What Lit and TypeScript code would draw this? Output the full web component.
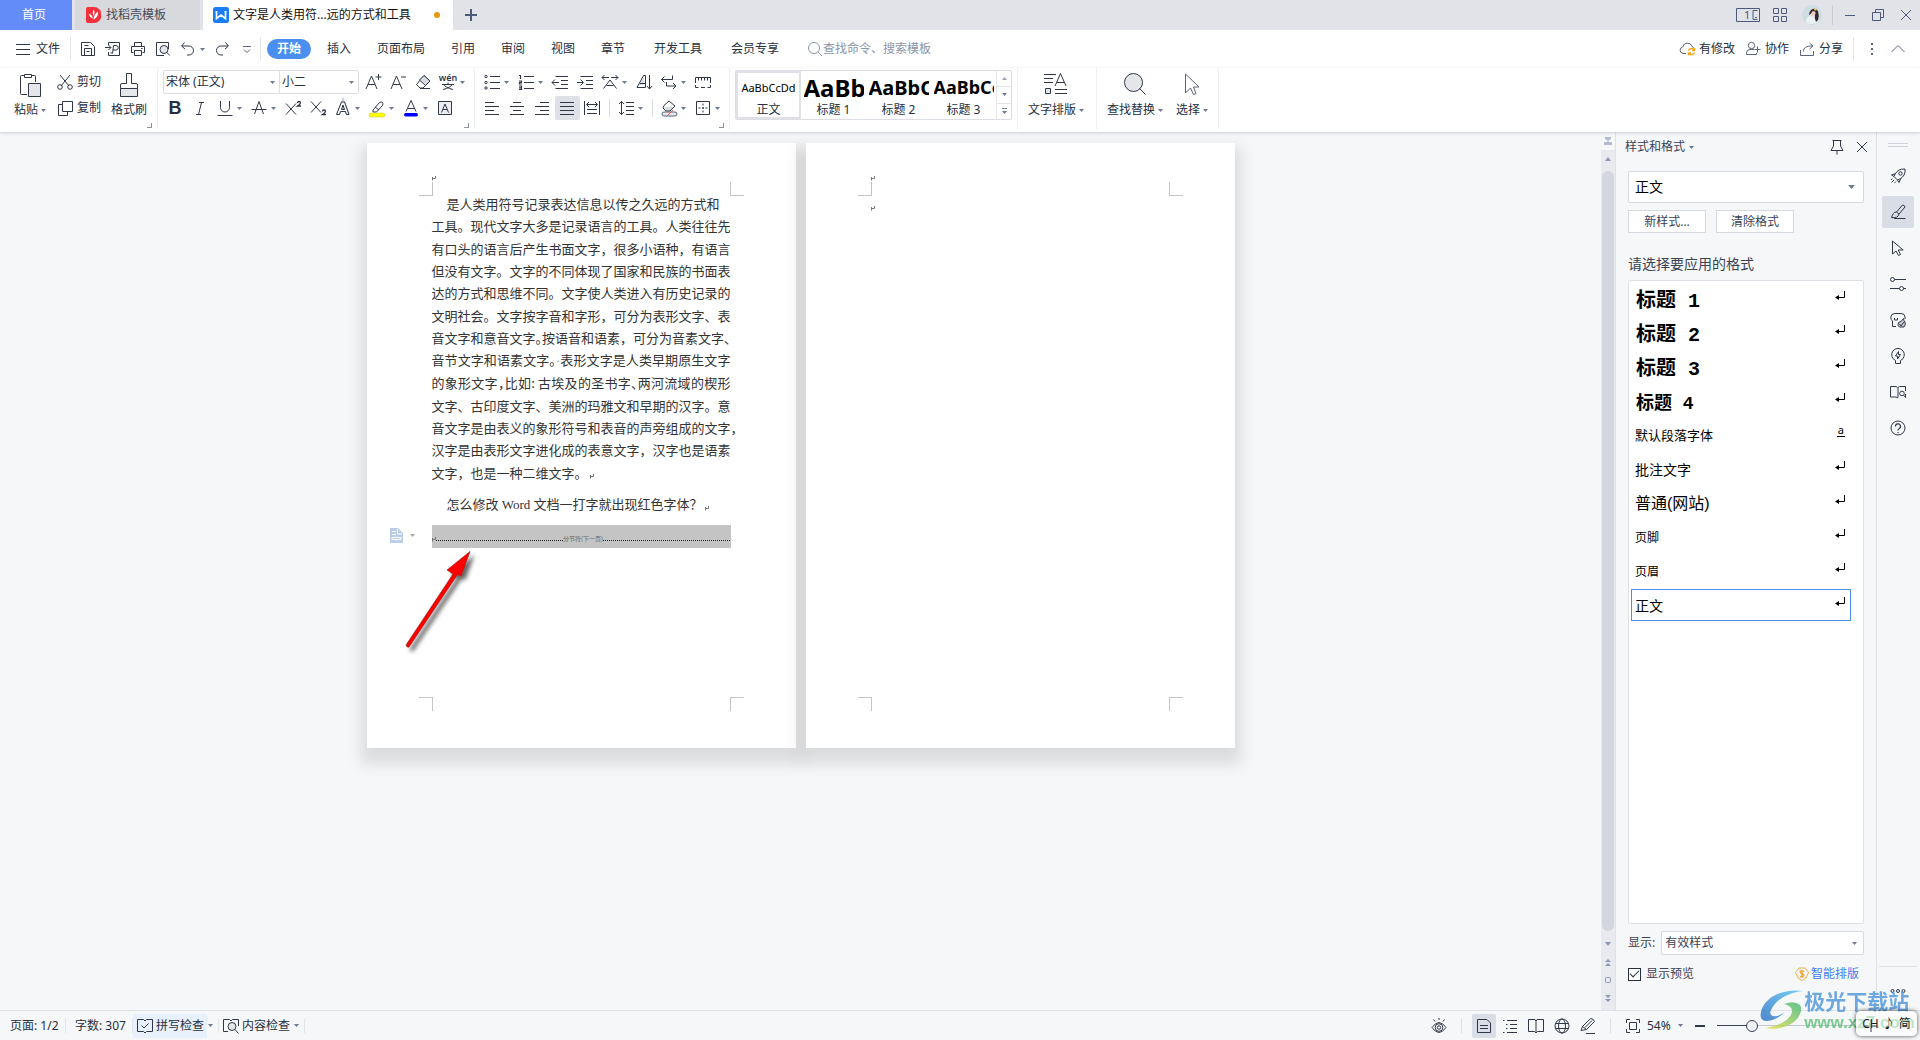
import { LitElement, html, svg, css, nothing } from "lit";
import { customElement } from "lit/decorators.js";
import { classMap } from "lit/directives/class-map.js";

/* Line icons; unless a size is given each one sits on a 16 x 16 grid. */
const glyphs: Record<string, unknown> = {
  menu: svg`<path d="M1 3.5h14M1 8.5h14M1 13.5h14"/>`,
  save: svg`<path d="M1.5 14.5v-13h9l4 4v9zM4.5 14.5v-7h7v7M4.5 4.5h4M6.5 10.5h3"/>`,
  exportPdf: svg`<path d="M3.5 4V1.500h11v13h-11V11M0 6.500h5.500M3.500 4l2.500 2.500L3.500 9M7.500 12.500l1-8h2.500a2.200 2.200 0 0 1 0 4.500H8M5.500 12h1.500"/>`,
  print: svg`<path d="M4.500 5.500v-4h7v4M3.500 11.500h-2v-6h13v6h-2M4.500 9.500h7v5h-7zM11 7.500h1.500"/>`,
  preview: svg`<path d="M9 14.500H1.500v-13h12V8" /><circle cx="9" cy="8.500" r="4" fill="#e4e6ea"/><path d="M11.800 11.500l3 3"/>`,
  undo: svg`<path d="M4.500 1.500l-3 3.500 3.500 3M2 5h7a4.200 4.200 0 0 1 0 9H7"/>`,
  redo: svg`<path d="M11.500 1.500l3 3.500-3.500 3M14 5H7a4.200 4.200 0 0 0 0 9h2"/>`,
  more: svg`<path d="M4 5.500h8M5 8.500l3 3 3-3" stroke="#5b6478"/>`,
  search: svg`<circle cx="7" cy="7" r="5.500" stroke="#8a96ae"/><path d="M11 11l4 4" stroke="#8a96ae"/>`,
  cloud: svg`<path d="M7 12.500H4a3.300 3.300 0 0 1-.3-6.500 4.800 4.800 0 0 1 9.300-.5c1 .3 1.500 1 1.800 2"/><path d="M9.500 9.800a3.200 3.200 0 0 1 5.700-.8M15.500 7v2.500H13M15.500 11.500a3.200 3.200 0 0 1-5.700.8M9.500 14.300V12H12" stroke="#f5a81c" stroke-width="1.500"/>`,
  person: svg`<circle cx="6.500" cy="4.500" r="3.200"/><path d="M9 8.500H5a3.500 3.500 0 0 0-3.500 3.500v1.500h10V12M9.500 8.500h6M12.500 5.500v6"/>`,
  share: svg`<path d="M1.500 9v5.500h13V10M4.500 10.500c0-4 3-5.500 9-5.500M10.500 2l3.500 3-3.500 3"/>`,
  dots: svg`<g fill="#5b6478" stroke="none"><path d="M7 2h2v2H7zM7 7h2v2H7zM7 12h2v2H7z"/></g>`,
  chevUp: svg`<path d="M1.500 11L8 4.500l6.500 6.500" stroke="#5b6478"/>`,
  cut: svg`<path d="M3 1l9 11M13 1L4 12"/><circle cx="3" cy="13" r="2.300"/><circle cx="13" cy="13" r="2.300"/>`,
  copy: svg`<path d="M5.500 1.500h10v10h-10zM5.500 4.500h-4v11h9v-4"/>`,
  bigger: svg`<path d="M1 15L6.500 2 12 15M3 10.500h7M13.500 0v6M10.500 3h6"/>`,
  smaller: svg`<path d="M1 15L6.500 2 12 15M3 10.500h7M11 3h5"/>`,
  eraser: svg`<path d="M9 1.500l6 5.500-7 7H5L1.500 10.500z"/><path d="M9 1.500l6 5.500-4.500 4.500-6-5.500z" fill="#d9dbe0"/><path d="M5 14.500h10"/>`,
  italic: svg`<path d="M7 2.500h5M4 14.500h5M9.500 2.500l-3 12"/>`,
  underline: svg`<path d="M3.500 1v6.500a4.500 4.500 0 0 0 9 0V1M.5 15.500h15"/>`,
  strike: svg`<path d="M3.500 14L8 1.500 12.500 14M.5 9.500h15"/>`,
  sup: svg`<path d="M1 3.500l10 11M11 3.500l-10 11"/><path d="M12.500 3q0-1.500 1.500-1.500t1.500 1.500q0 1-3 3h3.500" stroke-width="1.300"/>`,
  sub: svg`<path d="M1 1.500l10 11M11 1.500l-10 11"/><path d="M12.500 11.500q0-1.500 1.500-1.500t1.500 1.500q0 1-3 3h3.500" stroke-width="1.300"/>`,
  effect: svg`<path d="M3 14.500L8 2l5 12.500M5 10h6" stroke="#cfd3db" stroke-width="4"/><path d="M1.500 14.500L6.500 2h3l4.500 12.500h-2.500l-1-3h-5l-1 3zM6.500 9.500h3L8 5z" fill="#fff"/>`,
  marker: svg`<path d="M4 10l6.500-7.500q2-1 3 0t0 3L7.500 12H4zM6 7l4 3"/><rect x="0" y="13" width="16" height="4" rx="2" fill="#ff0" stroke="#bdbd50" stroke-width=".5"/>`,
  fontColor: svg`<path d="M3 11.500L8 .5l5 11M4.500 8.500h7"/><rect x="1" y="13" width="14" height="3.500" rx="1.700" fill="#00f" stroke="none"/>`,
  charBox: svg`<path d="M1.500 1.500h13v13h-13z" fill="#eceef1"/><path d="M4.500 12.500L8 4l3.500 8.500M6 9.500h4"/>`,
  bullets: svg`<circle cx="2" cy="2.500" r="1.200"/><circle cx="2" cy="8.500" r="1.200"/><circle cx="2" cy="14" r="1.200"/><path d="M6 2.500h10M6 8.500h10M6 14.500h10"/>`,
  numbers: svg`<path d="M1 1.500h1.500V5M1 7h2.500v1.500H1.500V10H4M1 12h2.500v3.500H1M1 13.800h2" stroke-width="1.200"/><path d="M6 2.500h10M6 8.500h10M6 14.500h10"/>`,
  outdent: svg`<path d="M3.500 2.500H16M9 6.500h7M9 10.500h7M3.500 14.500H16M0 8.500h7M3 5.500l-3 3 3 3"/>`,
  indent: svg`<path d="M3.500 2.500H16M9 6.500h7M9 10.500h7M3.500 14.500H16M0 8.500h6M3.500 5.500l3 3-3 3"/>`,
  textArrows: svg`<path d="M0 3.500h7M2.500 1L0 3.500 2.500 6M9 3.500h7M13.500 1L16 3.500 13.500 6M1.500 14.500L8 6l6.500 8.500M4.500 11.500h7"/>`,
  sort: svg`<path d="M3 11l5-8v8z" fill="#d9dbe0" stroke="none"/><path d="M1 13.500L7.500 1.500h2v12zM4 9.500h5" /><path d="M13.500 1v14M11 12l2.500 3 2.500-3"/>`,
  breaks: svg`<path d="M11.500 1.500v4h-11M3.500 2.500l-3 3 3 3M5.500 8v4h9.500M12 9l3 3-3 3"/>`,
  ruler: svg`<path d="M.5 9V3.500h15V9M3.500 3.500v3M6.500 3.500v3M9.500 3.500v3M12.500 3.500v3M.5 11v2.500h3M6 13.500h4M12.500 13.500h3V11"/>`,
  alignL: svg`<path d="M1 2.500h9M1 6.500h14M1 10.500h9M1 14.500h14"/>`,
  alignC: svg`<path d="M4 2.500h8M1 6.500h14M4 10.500h8M1 14.500h14"/>`,
  alignR: svg`<path d="M6 2.500h9M1 6.500h14M6 10.500h9M1 14.500h14"/>`,
  alignJ: svg`<path d="M1 2.500h14M1 6.500h14M1 10.500h14M1 14.500h14"/>`,
  distribute: svg`<path d="M.5 1v14M15.500 1v14M3 4.500h10M5 2L2.500 4.500 5 7M11 2l2.500 2.500L11 7M3 9.500h10M3 13.500h10"/>`,
  lineSpace: svg`<path d="M3.500 1.500v13M1 4l2.500-2.500L6 4M1 12l2.500 2.500L6 12M8 2.500h8M8 6.500h8M8 10.500h8M8 14.500h8"/>`,
  fill: svg`<path d="M3 7h10l-4 4H5z" fill="#d9dbe0" stroke="none"/><path d="M3 5.500L8 1l6 5-5 5H5L2 8z"/><rect x="1" y="12" width="15" height="4" rx="2" fill="#e4e6ea" stroke="#5b6478"/><path d="M6 16l6-6" stroke="#e55"/>`,
  borders: svg`<path d="M1.500 1.500h13v13h-13z"/><path d="M8 3.500v9M3.500 8h9" stroke-dasharray="2 1.500"/>`,
  eye: svg`<path d="M1 9.500q3.500-5 7-5t7 5q-3.500 5-7 5t-7-5zM8 0v2M2.500 1.500L4 3.500M13.500 1.500L12 3.500"/><circle cx="8" cy="9.500" r="3.800"/><circle cx="8" cy="9.500" r="1.700"/>`,
  pageView: svg`<path d="M1.500 1.500h9.500l3.500 3.500v9.500h-13zM4 7.500h8M4 10.500h8"/>`,
  outline: svg`<path d="M1 2.500h1.500M5 2.500h10M4 6.500h1.500M8 6.500h7M4 10.500h1.500M8 10.500h7M1 14.500h1.500M5 14.500h10"/>`,
  book: svg`<path d="M8 3v12M8 3L7 1.500H.5v12H6.500L8 15l1.500-1.500h6v-12H9z"/>`,
  globe: svg`<circle cx="8" cy="8" r="7"/><ellipse cx="8" cy="8" rx="3.500" ry="7"/><path d="M1.500 5.500h13M1.500 10.500h13"/>`,
  pen: svg`<path d="M1 12.500l1.500-4 8-8q3 0 4 3L6.500 11.500zM2.500 8.500l4 3M6 15.500h9M5 9.500l7-7"/>`,
  fit: svg`<path d="M1.500 5V1.500H5M11 1.500h3.500V5M14.500 11v3.500H11M5 14.500H1.500V11M4.500 4.500h7v7h-7z"/>`,
  spell: svg`<path d="M8 3L6.500 1.500h-6v12h6L8 15l1.500-1.500h6v-12h-6zM4.500 7.500L7 10l4.500-4.500"/>`,
  content: svg`<path d="M5 13.500H.5v-12h6L8 3l1.500-1.500h6V8"/><circle cx="9" cy="8.500" r="4" fill="#e4e6ea"/><path d="M12 11.500l3.500 4"/>`,
  rocket: svg`<path d="M15 1c-5-.3-7.500 1.500-9.500 4.500L1.500 7l2.500 1.500 3.500 3.500L9 14.500l1.800-4C13.500 8.500 15.500 6 15 1zM4 8.500l1.500-3M7.500 12l3.300-1.500M4 12l-2.500 2.500M2.500 10.500L1 12M6 13.500L4.500 15"/><circle cx="10.500" cy="5.500" r="1.700"/>`,
  brush: svg`<path d="M6.500 8l6-7q2 0 2.500 2L9 10M6.500 8c-3 0-3.500 2-5 5.500 4 .8 7-.5 7.500-3.500zM4 14.500h11.500"/>`,
  pointer: svg`<path d="M2.500 1v13l3.500-3 2.500 4.500 2-1-2.300-4.500h5z"/>`,
  sliders: svg`<circle cx="2.500" cy="3.500" r="2"/><path d="M4.500 3.500H16M0 12.500h9.500M13.500 12.500H16"/><circle cx="11.500" cy="12.500" r="2"/>`,
  picture: svg`<path d="M6 14.500H2.500V9Q.800 8 .8 5 1 1.500 5 1.500h6q4 0 4 3.500v2M4.500 6v2h3V6"/><path d="M8 12.500q0-3 3-3l2.500-3q0 2 1.500 3.500 1 3-1 5h-4.500q-1.500-1-1.500-2.500z" fill="#c7cbd3"/><path d="M9.500 12l1.500 2 3-4"/>`,
  bulb: svg`<path d="M5.500 12.500a6.300 6.300 0 1 1 5 0v3h-5zM8.500 3.500l-3 4.500h2v3l3-4.500h-2z"/>`,
  bookSearch: svg`<path d="M7.500 3.500L6 2.500H.5v10.500H6l2 1M8 3.500v10M8 3.500l1.500-1h6V7M15.500 13.500V10"/><circle cx="12" cy="9.500" r="2.300"/><path d="M13.700 11.200l2 2.300"/>`,
  help: svg`<circle cx="8" cy="8" r="7"/><path d="M5.500 6.500a2.500 2.500 0 1 1 3.500 2.200q-1 .5-1 1.800M8 12v1.200" stroke-width="1.200"/>`,
  pin: svg`<path d="M3.500 1.500h9M4.500 1.500v5.500L2 11.500h12L11.500 7V1.500M8 11.500v4"/>`,
  close: svg`<path d="M3 3l10 10M13 3L3 13"/>`,
  grid4: svg`<path d="M1.500 1.500h5v5h-5zM9.500 1.500h5v5h-5zM1.500 9.500h5v5h-5zM9.500 9.500h5v5h-5z"/>`,
  minimise: svg`<path d="M3 8.500h10"/>`,
  restore: svg`<path d="M2.500 5.500h8v8h-8zM5.500 5V2.500h8v8H11"/>`,
  plus: svg`<path d="M8 2v12M2 8h12" stroke-width="2"/>`,
  minus: svg`<path d="M3 8h10" stroke-width="2"/>`,
};

const icon = (name: string, cls = "") => html`
  <svg class="ico ${cls}" width="16" height="16" viewBox="0 0 16 16" aria-hidden="true">${glyphs[name]}</svg>`;

const caret = html`
  <svg class="caret" width="5" height="3" viewBox="0 0 5 3" aria-hidden="true"><path d="M0 0h5L2.500 3z"/></svg>`;

const enter = html`
  <svg class="enter" width="10" height="9" viewBox="0 0 10 9" aria-hidden="true">
    <path d="M9.500 0v6.500H2" fill="none" stroke="#000"/><path d="M0 6.500L4 4v5z"/>
  </svg>`;

const paraMark = html`
  <svg class="mark" width="4" height="5" viewBox="0 0 4 5" aria-hidden="true">
    <path d="M3.500 0v2.500H1M.5 1v3.500" fill="none" stroke="#777"/>
  </svg>`;

type Tool = { icon?: string; label: string; drop?: boolean; on?: boolean; sep?: boolean };

const fontTop: Tool[] = [
  { icon: "bigger", label: "增大字号" },
  { icon: "smaller", label: "减小字号" },
  { icon: "eraser", label: "清除格式" },
  { icon: "pinyin", label: "拼音指南", drop: true },
];
const fontBottom: Tool[] = [
  { icon: "bold", label: "加粗" },
  { icon: "italic", label: "倾斜" },
  { icon: "underline", label: "下划线", drop: true },
  { icon: "strike", label: "删除线", drop: true },
  { icon: "sup", label: "上标" },
  { icon: "sub", label: "下标" },
  { icon: "effect", label: "文字效果", drop: true },
  { icon: "marker", label: "突出显示", drop: true },
  { icon: "fontColor", label: "字体颜色", drop: true },
  { icon: "charBox", label: "字符底纹" },
];
const paraTop: Tool[] = [
  { icon: "bullets", label: "项目符号", drop: true },
  { icon: "numbers", label: "编号", drop: true },
  { icon: "outdent", label: "减少缩进量" },
  { icon: "indent", label: "增加缩进量" },
  { icon: "textArrows", label: "中文版式", drop: true },
  { icon: "sort", label: "排序" },
  { icon: "breaks", label: "显示编辑标记", drop: true },
  { icon: "ruler", label: "制表位" },
];
const paraBottom: Tool[] = [
  { icon: "alignL", label: "左对齐" },
  { icon: "alignC", label: "居中对齐" },
  { icon: "alignR", label: "右对齐" },
  { icon: "alignJ", label: "两端对齐", on: true },
  { icon: "distribute", label: "分散对齐" },
  { label: "", sep: true },
  { icon: "lineSpace", label: "行距", drop: true },
  { label: "", sep: true },
  { icon: "fill", label: "底纹颜色", drop: true },
  { icon: "borders", label: "边框", drop: true },
];

const bodyLines = [
  html`工具。现代文字大多是记录语言的工具。人类往往先`,
  html`有口头的语言后产生书面文字，很多小语种，有语言`,
  html`但没有文字。文字的不同体现了国家和民族的书面表`,
  html`达的方式和思维不同。文字使人类进入有历史记录的`,
  html`文明社会。文字按字音和字形，可分为表形文字、表`,
  html`音文字和意音文字<span class="half">。</span>按语音和语素，可分为音素文字、`,
  html`音节文字和语素文字<span class="half">。</span><span class="space">·</span>表形文字是人类早期原生文字`,
  html`的象形文字<span class="half">，</span>比如: 古埃及的圣书字<span class="half">、</span>两河流域的楔形`,
  html`文字、古印度文字、美洲的玛雅文和早期的汉字。意`,
  html`音文字是由表义的象形符号和表音的声旁组成的文字，`,
  html`汉字是由表形文字进化成的表意文字，汉字也是语素`,
];

const styleRows = [
  { text: "标题 1", cls: "h20" },
  { text: "标题 2", cls: "h20" },
  { text: "标题 3", cls: "h20" },
  { text: "标题 4", cls: "h18" },
  { text: "默认段落字体", cls: "t13", char: true },
  { text: "批注文字", cls: "t14" },
  { text: "普通(网站)", cls: "t16" },
  { text: "页脚", cls: "t12" },
  { text: "页眉", cls: "t12" },
  { text: "正文", cls: "t14", on: true },
];

@customElement("app-root")
export class AppRoot extends LitElement {
  static styles = css`
    :host {
      display: flex;
      flex-direction: column;
      position: relative;
      min-height: 100vh;
      overflow: hidden;
      background: #f6f7f9;
      color: #262f40;
      font: 12px/16px "Noto Sans", "Noto Sans CJK SC", sans-serif;
    }
    * { box-sizing: border-box; }
    button, select, input { font: inherit; color: inherit; margin: 0; }
    button {
      display: flex;
      align-items: center;
      border: 0;
      padding: 0;
      background: none;
      white-space: nowrap;
    }
    svg { flex: none; display: block; }
    .ico { fill: none; stroke: #2f3748; stroke-width: 1; overflow: visible; }
    .caret { fill: #6d7993; }
    .row { display: flex; align-items: center; }
    .grow { flex: 1; }
    .vsep { width: 1px; flex: none; background: #e3e5e9; }

    /* title bar */
    .titlebar { display: flex; align-items: center; height: 30px; background: #e1e3e8; }
    .tab { height: 30px; gap: 5px; }
    .tab-home { width: 72px; padding-right: 4px; justify-content: center; background: #638cf8; color: #fff; }
    .tab-docer { width: 125px; margin-left: 3px; padding-left: 11px; background: #d8d9dc; color: #444b59; }
    .tab-doc { width: 250px; margin-left: 3px; padding-left: 10px; background: #fff; color: #111; gap: 4px; }
    .dirty { width: 6px; height: 6px; border-radius: 50%; background: #e69a0b; margin-left: 19px; }
    .add { margin-left: 10px; }
    .add .ico, .win .ico { stroke: #4c5a7c; }
    .win { height: 30px; }
    .win button { justify-content: center; width: 28px; height: 30px; }
    .win .w24 { width: 24px; }
    .win .w40 { width: 40px; }
    .win .vsep { height: 20px; margin-right: 3px; background: #c8ccd4; }
    .count { fill: #4c5a7c; stroke: none; font-size: 11px; }

    /* menu row */
    .menu { display: flex; align-items: center; height: 38px; background: #fff; padding: 0 14px 0 15px; }
    .file { gap: 5px; width: 55px; }
    .menu .vsep { height: 24px; }
    .quick { gap: 9px; padding: 0 9px; width: 189px; }
    .undo-drop { display: flex; align-items: center; gap: 4px; width: 26px; }
    .pages { display: flex; align-items: center; padding-left: 6px; }
    .pages button { height: 20px; width: 50px; justify-content: center; }
    .pages .mid { width: 74px; }
    .pages .wide { width: 80px; }
    .pages .first { width: 44px; margin-right: 3px; border-radius: 10px; background: #4a8ff0; color: #fff; font-weight: 700; }
    .find { display: flex; align-items: center; margin-left: 15px; }
    .find input { width: 130px; border: 0; padding: 0; background: none; outline: 0; }
    .find input::placeholder { color: #8a94aa; opacity: 1; }
    .cloudbar { gap: 10px; }
    .cloudbar button { gap: 4px; }
    .cloudbar .ico { stroke: #5b6478; }

    /* ribbon */
    .ribbon {
      display: flex;
      height: 64px;
      background: #fff;
      box-shadow: 0 1px 3px rgba(60, 70, 90, .22);
      position: relative;
      z-index: 1;
    }
    .ribbon > .vsep { height: 61px; background: #eeeff2; }
    .group { display: flex; position: relative; padding-top: 2px; }
    .corner { position: absolute; right: 5px; bottom: 4px; width: 5px; height: 5px; border: solid #8b93a5; border-width: 0 1px 1px 0; }
    .clip { width: 157px; padding-left: 8px; }
    .big { flex-direction: column; justify-content: space-between; height: 51px; padding: 3px 0 1px; }
    .big .txt { display: flex; align-items: center; gap: 3px; height: 20px; }
    .w44 { width: 44px; }
    .stack { display: flex; flex-direction: column; gap: 2px; }
    .stack .line { display: flex; height: 24px; align-items: center; }
    .pair { padding-left: 5px; width: 55px; }
    .pair button { gap: 4px; height: 24px; }
    .fontgroup, .paragroup { padding-left: 5px; }
    .fontgroup { width: 316px; }
    .paragroup { width: 254px; }
    .combo { display: grid; align-items: center; height: 24px; border: 1px solid #dcdee3; border-radius: 2px; }
    .combo > * { grid-area: 1 / 1; }
    .combo select { appearance: none; border: 0; background: none; width: 100%; height: 100%; padding: 0 16px 0 2px; outline: 0; }
    .combo .caret { justify-self: end; margin-right: 4px; pointer-events: none; }
    .face { width: 117px; border-radius: 2px 0 0 2px; }
    .size { width: 79px; border-left: 0; border-radius: 0 2px 2px 0; margin-right: 2px; }
    .tool { width: 25px; height: 24px; padding-left: 4px; gap: 4px; border-radius: 2px; }
    .tool.drop { width: 34px; }
    .tool.on { background: #dde1e7; }
    .toolsep { width: 1px; height: 18px; margin: 0 4px; background: #dcdee3; }
    .bold { width: 16px; font: 700 18px/18px "Liberation Sans", sans-serif; text-align: center; }
    .wen { width: 16px; }

    .gallery { display: flex; height: 50px; margin: 0 5px; border: 1px solid #dcdee3; border-radius: 2px; width: 277px; }
    .style { flex-direction: column; width: 65px; height: 48px; overflow: hidden; padding: 2px 3px 0; }
    .style.on { border: 2px solid #dfe1e6; padding: 0; }
    .style .demo { height: 29px; line-height: 29px; width: 60px; overflow: hidden; text-align: left; color: #000; flex: none; }
    .style.on .demo { font-size: 11px; text-align: center; }
    .d24 { font: 700 24px/30px "Noto Sans", sans-serif; }
    .d20 { font: 700 20px/30px "Noto Sans", sans-serif; }
    .d18 { font: 700 18px/30px "Noto Sans", sans-serif; }
    .spin { display: flex; flex-direction: column; flex: 1; border-left: 1px solid #e3e5e9; }
    .spin button { flex: 1; justify-content: center; border-bottom: 1px solid #e3e5e9; }
    .spin button:last-child { border-bottom: 0; }
    .layout { width: 78px; padding-left: 9px; }
    .w58 { width: 58px; }
    .search { width: 121px; padding-left: 9px; gap: 11px; }
    .w34 { width: 34px; }

    /* work area */
    .work { display: flex; flex: 1; min-height: 0; }
    .canvas { flex: 1; display: flex; justify-content: center; align-items: flex-start; gap: 10px; padding-top: 11px; position: relative; }
    .sheet {
      position: relative;
      width: 429px;
      height: 605px;
      padding: 50px 65px 0;
      background: #fff;
      box-shadow: 0 10px 14px 6px rgba(60, 60, 60, .14);
      color: #333;
      font: 13px/22px "Liberation Serif", "Noto Sans CJK SC", serif;
    }
    .crop { position: absolute; width: 14px; height: 14px; border: 0 solid #c4c4c4; }
    .tl { left: 52px; top: 39px; border-width: 0 1px 1px 0; }
    .tr { right: 52px; top: 39px; border-width: 0 0 1px 1px; }
    .bl { left: 52px; bottom: 37px; border-width: 1px 1px 0 0; }
    .br { right: 52px; bottom: 37px; border-width: 1px 0 0 1px; }
    .sheet > .mark { position: absolute; left: 65px; top: 33px; }
    .sheet > .mark.second { top: 63px; }
    .para {
      display: grid;
      grid-template-columns: minmax(0, 1fr);
      grid-auto-rows: 1fr;
      align-items: center;
      height: 291px;
      margin: 0;
      font-family: "Noto Sans CJK SC", sans-serif;
    }
    .para span.ln { display: block; white-space: nowrap; text-align-last: justify; }
    .para span.first { text-align-last: left; padding-left: 15px; }
    .para span.last, .para2 { display: flex; align-items: flex-end; gap: 2px; }
    .last .mark, .para2 .mark { margin-bottom: 5px; }
    .para2 { margin: 10px 0 9px; padding-left: 15px; white-space: nowrap; }
    .half { font-feature-settings: "halt"; }
    .space { color: #999; font-family: "Liberation Serif", serif; }
    .break { display: flex; align-items: center; height: 23px; background: #c4c4c4; padding-top: 5px; font: 6px/8px "Noto Sans CJK SC", sans-serif; color: #666; }
    .break .dots { flex: 1; height: 1px; margin-top: 2px; background: repeating-linear-gradient(90deg, #222 0 1px, transparent 1px 2px); }
    .paste-opt { position: absolute; left: 23px; top: 385px; gap: 7px; }
    .paste-opt .caret { fill: #aaa; }
    .arrow { position: absolute; left: 30px; top: 399px; overflow: visible; }

    .scroll { width: 15px; display: flex; flex-direction: column; align-items: center; background: #e9eaf0; border-right: 1px solid #dfe1e6; padding-bottom: 3px; position: relative; }
    .scroll button { width: 14px; justify-content: center; }
    .top-mark { height: 18px; background: #f6f7f9; }
    .up { height: 21px; padding-bottom: 3px; }
    .thumb { flex: 1; width: 12px; border-radius: 6px; background: #d3d6df; }
    .down { height: 22px; padding-top: 3px; }
    .step { height: 18px; }

    .panel { display: flex; flex-direction: column; width: 261px; padding: 7px 12px 0; border-right: 1px solid #dfe1e6; color: #3a4355; }
    .phead { display: flex; align-items: center; height: 16px; gap: 4px; margin: 0 -6px 16px -3px; }
    .phead .txt { gap: 4px; }
    .phead .pin { margin-right: 5px; }
    .box { background: #fff; border-color: #d6d9df; }
    .cur { height: 32px; font-size: 14px; color: #000; }
    .cur select { padding-left: 6px; }
    .cur .caret { width: 7px; height: 4px; margin-right: 8px; }
    .acts { display: flex; gap: 10px; margin: 7px 0 21px; }
    .acts button { width: 78px; height: 23px; border: 1px solid #d6d9df; background: #fff; justify-content: center; }
    .ask { font-size: 14px; line-height: 20px; margin: 0 0 6px; font-weight: 400; }
    .list { flex: 1; margin: 0; padding: 2px; list-style: none; border: 1px solid #dfe1e6; border-radius: 2px; background: #fff; color: #000; }
    .list button { width: calc(100% - 10px); height: 32px; margin-bottom: 2px; border: 1px solid transparent; padding: 0 5px 0 3px; justify-content: space-between; font-family: "Liberation Sans", "Noto Sans CJK SC", sans-serif; }
    .list li.on button { border-color: #4a90e8; }
    .list .enter { margin-bottom: 8px; }
    .char { margin-bottom: 8px; border-bottom: 1px solid #000; font: 11px/10px "Noto Sans", sans-serif; padding: 0 1px 1px; }
    .h20, .h18 { font: 700 20px/30px "Liberation Mono", "Noto Sans CJK SC", monospace; padding: 6px 0 0 1px; }
    .h18 { font-size: 18px; }
    .t12 { font-size: 12px; padding-top: 2px; }
    .t13 { font-size: 13px; padding-top: 2px; }
    .t14 { font-size: 14px; padding-top: 2px; }
    .t16 { font-size: 16px; padding-top: 2px; }
    .show { display: flex; align-items: center; gap: 6px; height: 24px; margin: 7px 0 11px; }
    .show .combo { flex: 1; }
    .show select { padding-left: 3px; }
    .show .caret { margin-right: 6px; }
    .check { display: flex; align-items: center; gap: 5px; }
    .check input { appearance: none; width: 13px; height: 13px; border: 1px solid #262f40; background: #fff; display: grid; place-items: center; }
    .check input:checked::before { content: ""; width: 8px; height: 4px; border: solid #262f40; border-width: 0 0 1px 1px; transform: rotate(-45deg); margin-bottom: 3px; }
    .pfoot { display: flex; align-items: center; justify-content: space-between; padding-right: 5px; margin-bottom: 28px; }
    .smart { gap: 2px; color: #3f7cf5; text-decoration: none; display: flex; align-items: center; }

    .rail { display: flex; flex-direction: column; align-items: center; width: 43px; padding: 11px 1px 0 0; }
    .grip { width: 20px; height: 4px; border: solid #cdd1d9; border-width: 1px 0; margin-bottom: 13px; }
    .rail button { width: 32px; height: 32px; margin-bottom: 4px; justify-content: center; border-radius: 2px; }
    .rail .on { background: #d9dee6; }
    .rail .line { width: 38px; height: 1px; background: #e0e3e8; margin-bottom: 21px; }
    .rail .dots3 { margin-bottom: 16px; }

    /* status bar */
    .status { display: flex; align-items: center; height: 30px; border-top: 1px solid #dfe1e6; padding: 0 10px; }
    .status > * { flex: none; }
    .status > .grow { flex: 1; }
    .status .vsep { height: 14px; }
    .pg { width: 55px; white-space: nowrap; }
    .wc { width: 66px; padding-left: 9px; white-space: nowrap; }
    .chk { gap: 3px; height: 24px; padding: 0 3px 0 4px; }
    .chk.on { background: #e8f0fd; }
    .status .drop1 { width: 11px; height: 24px; padding-left: 1px; }
    .views { gap: 2px; }
    .views button { width: 24px; height: 24px; justify-content: center; }
    .views .toolsep { margin: 0 8px; height: 14px; }
    .views .on { background: #d9dee6; border-radius: 2px; }
    .zoom { width: 36px; justify-content: space-between; margin: 0 9px 0 6px; }
    .range { appearance: none; width: 136px; height: 12px; margin: 0 10px 0 9px; background: linear-gradient(90deg, #3a4355 0 30px, #c3c8d3 30px) center / 100% 1px no-repeat; }
    .range::-webkit-slider-thumb { appearance: none; width: 12px; height: 12px; border: 1px solid #3a4355; border-radius: 50%; background: #f0f1f4; }
    .fitbtn { margin-left: 6px; }
    .tail { width: 31px; }

    /* floating marks over the window */
    .brand { position: absolute; right: 5px; bottom: 7px; display: flex; align-items: center; opacity: .82; pointer-events: none; }
    .brand .cn { font: 700 21px/26px "Noto Sans CJK SC", sans-serif; color: #4f97dc; }
    .brand .en { font: 700 17px/20px "Liberation Sans", sans-serif; color: #65c17c; }
    .ime { position: absolute; right: 3px; bottom: 4px; width: 61px; height: 25px; display: flex; align-items: center; justify-content: center; gap: 4px; border-radius: 5px; background: rgba(255, 255, 255, .5); box-shadow: 0 0 4px rgba(0, 0, 0, .7); color: #222; white-space: nowrap; }
  `;

  private tool(t: Tool) {
    if (t.sep) return html`<span class="toolsep"></span>`;
    let face: unknown;
    if (t.icon === "bold") face = html`<span class="bold">B</span>`;
    else if (t.icon === "pinyin")
      face = html`<svg class="ico wen" width="16" height="16" viewBox="0 0 16 16" aria-hidden="true">
        <text x="8" y="7" text-anchor="middle" font-size="9" font-weight="600" fill="#2f3748" stroke="none">wén</text>
        <path d="M2 10.500h12M8 8.500v2M4 10.500q1 3 9 5M12 10.500q-1 3-9 5"/></svg>`;
    else face = icon(t.icon!);
    return html`<button class=${classMap({ tool: true, drop: !!t.drop, on: !!t.on })} aria-label=${t.label}>
      ${face}${t.drop ? caret : nothing}</button>`;
  }

  private titlebar() {
    return html`<header class="titlebar">
      <button class="tab tab-home">首页</button>
      <button class="tab tab-docer">
        <svg width="15" height="16" viewBox="0 0 15 16" aria-hidden="true">
          <path d="M0 2q0-2 2-2h6a7.500 8 0 0 1 0 16H2q-2 0-2-2z" fill="#f4303c"/>
          <path d="M7.500 2.500q2 3 0 6.500-1.500-3 0-6.500zM3 6.500q3 1 4 5-4-1-4-5zM12 4.500q1 5-4.500 8 0-5 4.500-8z" fill="#fff"/>
        </svg>
        <span>找稻壳模板</span>
      </button>
      <button class="tab tab-doc">
        <svg width="16" height="16" viewBox="0 0 16 16" aria-hidden="true">
          <rect width="16" height="16" rx="2.500" fill="#1a7cf8"/>
          <path d="M3.500 4v7.500L8 8l4.500 3.500V4M2.500 4.800h2M11.500 4.800h2" fill="none" stroke="#fff" stroke-width="1.600"/>
        </svg>
        <span>文字是人类用符...远的方式和工具</span><i class="dirty"></i>
      </button>
      <button class="add" aria-label="新建">${icon("plus")}</button>
      <span class="grow"></span>
      <div class="win row">
        <button class="w40" aria-label="窗口数">
          <svg class="ico" width="24" height="14" viewBox="0 0 24 14" aria-hidden="true">
            <path d="M.5.500h23v13H.5zM21.500 2.500h-4.500v9h4.500M19 9.500h2"/><text class="count" x="8" y="11">1</text>
          </svg>
        </button>
        <button class="w24" aria-label="应用">${icon("grid4")}</button>
        <button class="w40" aria-label="账号">
          <svg width="20" height="20" viewBox="0 0 20 20" aria-hidden="true">
            <circle cx="10" cy="10" r="10" fill="#cddde3"/>
            <path d="M4 18q0-7 6-8l5 3 1 4q-5 3.500-12 1z" fill="#eaf3f4"/>
            <path d="M9 5q4-3 7 1 1.500 5 0 9l-2 2q-2-4-1-7l-3-2-3 2q0-3 2-5z" fill="#33272c"/>
            <path d="M10 6.500q3-1 3.500 1t-2 3.500-2.500-1.500z" fill="#f0cfc0"/><path d="M12 4.500l2.500.500" stroke="#e8b93c" stroke-width="1.500"/>
          </svg>
        </button>
        <span class="vsep"></span>
        <button aria-label="最小化">${icon("minimise")}</button>
        <button aria-label="还原">${icon("restore")}</button>
        <button aria-label="关闭">${icon("close")}</button>
      </div>
    </header>`;
  }

  private menu() {
    return html`<nav class="menu">
      <button class="file">${icon("menu")}<span>文件</span></button>
      <span class="vsep"></span>
      <div class="quick row">
        <button aria-label="保存">${icon("save")}</button>
        <button aria-label="输出为PDF">${icon("exportPdf")}</button>
        <button aria-label="打印">${icon("print")}</button>
        <button aria-label="打印预览">${icon("preview")}</button>
        <button class="undo-drop" aria-label="撤销">${icon("undo")}${caret}</button>
        <button aria-label="恢复">${icon("redo")}</button>
        <button aria-label="更多">${icon("more")}</button>
      </div>
      <span class="vsep"></span>
      <div class="pages">
        <button class="first">开始</button>
        <button>插入</button>
        <button class="mid">页面布局</button>
        <button>引用</button>
        <button>审阅</button>
        <button>视图</button>
        <button>章节</button>
        <button class="wide">开发工具</button>
        <button class="mid">会员专享</button>
      </div>
      <label class="find">${icon("search")}<input type="text" aria-label="搜索" placeholder="查找命令、搜索模板" /></label>
      <span class="grow"></span>
      <div class="cloudbar row">
        <button>${icon("cloud")}有修改</button>
        <button>${icon("person")}协作</button>
        <button>${icon("share")}分享</button>
        <span class="vsep"></span>
        <button aria-label="更多">${icon("dots")}</button>
        <button aria-label="折叠功能区">${icon("chevUp")}</button>
      </div>
    </nav>`;
  }

  private ribbon() {
    return html`<section class="ribbon">
      <div class="group clip">
        <button class="big w44">
          <svg class="ico" width="22" height="24" viewBox="0 0 22 24" aria-hidden="true">
            <path d="M8 21.500H2.500q-1 0-1-1v-17q0-1 1-1H5M13 2.500h2.500q1 0 1 1V9M5.500 1.500h7v3h-7z"/><path d="M9.500 10.500h12v13h-12z" fill="#e4e6ea"/>
          </svg>
          <span class="txt">粘贴${caret}</span>
        </button>
        <div class="stack pair">
          <button>${icon("cut")}剪切</button>
          <button>${icon("copy")}复制</button>
        </div>
        <button class="big w44">
          <svg class="ico" width="18" height="24" viewBox="0 0 18 24" aria-hidden="true">
            <path d="M.5 15.500h17v8H.5z" fill="#e4e6ea"/><path d="M.5 15.500V12q0-1.500 1.500-1.500h4.500V.500h5v10H16q1.500 0 1.500 1.500v3.500"/>
          </svg>
          <span class="txt">格式刷</span>
        </button>
        <i class="corner"></i>
      </div>
      <span class="vsep"></span>
      <div class="group fontgroup">
        <div class="stack">
          <div class="line">
            <div class="combo face"><select aria-label="字体"><option>宋体 (正文)</option></select>${caret}</div>
            <div class="combo size"><select aria-label="字号"><option>小二</option></select>${caret}</div>
            ${fontTop.map((t) => this.tool(t))}
          </div>
          <div class="line">${fontBottom.map((t) => this.tool(t))}</div>
        </div>
        <i class="corner"></i>
      </div>
      <span class="vsep"></span>
      <div class="group paragroup">
        <div class="stack">
          <div class="line">${paraTop.map((t) => this.tool(t))}</div>
          <div class="line">${paraBottom.map((t) => this.tool(t))}</div>
        </div>
        <i class="corner"></i>
      </div>
      <span class="vsep"></span>
      <div class="group">
        <div class="gallery">
          <button class="style on"><span class="demo">AaBbCcDd</span><span>正文</span></button>
          <button class="style"><span class="demo d24">AaBb</span><span>标题 1</span></button>
          <button class="style"><span class="demo d20">AaBbC</span><span>标题 2</span></button>
          <button class="style"><span class="demo d18">AaBbCc</span><span>标题 3</span></button>
          <div class="spin">
            <button aria-label="上一行"><svg width="5" height="3" viewBox="0 0 5 3"><path d="M0 3h5L2.500 0z" fill="#9aa3b5"/></svg></button>
            <button aria-label="下一行">${caret}</button>
            <button aria-label="全部样式"><svg width="5" height="6" viewBox="0 0 5 6"><path d="M0 0h5v1H0zM0 3h5L2.500 6z" fill="#6d7993"/></svg></button>
          </div>
        </div>
      </div>
      <span class="vsep"></span>
      <div class="group layout">
        <button class="big w58">
          <svg class="ico" width="24" height="22" viewBox="0 0 24 22" aria-hidden="true">
            <path d="M0 1.500h12M0 5.500h9M0 9.500h9M11 13L16.500.500 22 13M13 9.500h7M11 16.500h12M11 20.500h12"/><path d="M1.500 15.500h5v5h-5z" fill="#e4e6ea"/>
          </svg>
          <span class="txt">文字排版${caret}</span>
        </button>
      </div>
      <span class="vsep"></span>
      <div class="group search">
        <button class="big w58">
          <svg class="ico" width="22" height="22" viewBox="0 0 22 22" aria-hidden="true">
            <circle cx="9.500" cy="9.500" r="9" fill="#e4e6ea"/><path d="M15.500 15.500l6 6"/>
          </svg>
          <span class="txt">查找替换${caret}</span>
        </button>
        <button class="big w34">
          <svg class="ico" width="16" height="22" viewBox="0 0 16 22" aria-hidden="true">
            <path d="M1.500 1v19l5-5 3 6.500 2.500-1L9.500 14h5.500z" stroke="#5b6478"/>
          </svg>
          <span class="txt">选择${caret}</span>
        </button>
      </div>
      <span class="vsep"></span>
    </section>`;
  }

  private sheets() {
    const crops = html`<i class="crop tl"></i><i class="crop tr"></i><i class="crop bl"></i><i class="crop br"></i>`;
    return html`<main class="canvas">
      <article class="sheet">
        ${crops}${paraMark}
        <p class="para">
          <span class="ln first">是人类用符号记录表达信息以传之久远的方式和</span>
          ${bodyLines.map((l) => html`<span class="ln">${l}</span>`)}
          <span class="last">文字，也是一种二维文字。${paraMark}</span>
        </p>
        <p class="para2">怎么修改 Word 文档一打字就出现红色字体？${paraMark}</p>
        <div class="break">${paraMark}<i class="dots"></i><span>分节符(下一页)</span><i class="dots"></i></div>
        <button class="paste-opt" aria-label="粘贴选项">
          <svg width="13" height="15" viewBox="0 0 13 15" aria-hidden="true">
            <path d="M0 0h8l5 5v10H0z" fill="#b9cdea"/><path d="M7.500 1v5H12M2 3.500h4M2 6.500h4M2 9.500h9v2H2zM6 11.500v1.500" fill="none" stroke="#fff"/>
          </svg>${caret}
        </button>
        <svg class="arrow" width="90" height="116" viewBox="0 0 90 116" aria-hidden="true">
          <defs><filter id="sh" x="-30%" y="-30%" width="170%" height="170%">
            <feDropShadow dx="4" dy="4" stdDeviation="2" flood-color="#000" flood-opacity=".6"/></filter></defs>
          <g filter="url(#sh)" fill="#ff0000" stroke="#8d1010" stroke-width=".6">
            <path d="M9 103L56 32l-6-4L73 9.500 64 34l-3.500-1.500L12 105q-2 1-3-2z"/>
          </g>
        </svg>
      </article>
      <article class="sheet">
        ${crops}${paraMark}
        <svg class="mark second" width="4" height="5" viewBox="0 0 4 5" aria-hidden="true"><path d="M3.500 0v2.500H1M.5 1v3.500" fill="none" stroke="#777"/></svg>
      </article>
    </main>`;
  }

  private scroller() {
    const c = "#8d97b2";
    return html`<div class="scroll">
      <button class="top-mark" aria-label="标尺"><svg width="8" height="8" viewBox="0 0 8 8"><path d="M1 0h6v2L4 4 1 2zM3.500 3h1v2h3.500v3H0V5h3.500z" fill="#b4bbd0"/></svg></button>
      <button class="up" aria-label="向上"><svg width="6" height="4" viewBox="0 0 6 4"><path d="M0 4h6L3 0z" fill=${c}/></svg></button>
      <span class="thumb"></span>
      <button class="down" aria-label="向下"><svg width="6" height="4" viewBox="0 0 6 4"><path d="M0 0h6L3 4z" fill=${c}/></svg></button>
      <button class="step" aria-label="上一页"><svg width="6" height="7" viewBox="0 0 6 7"><path d="M0 3h6L3 0zM0 7h6L3 4z" fill=${c}/></svg></button>
      <button class="step" aria-label="选择浏览对象"><svg width="6" height="6" viewBox="0 0 6 6"><rect x=".5" y=".5" width="5" height="5" rx="1" fill="none" stroke=${c}/></svg></button>
      <button class="step" aria-label="下一页"><svg width="6" height="7" viewBox="0 0 6 7"><path d="M0 0h6L3 3zM0 4h6L3 7z" fill=${c}/></svg></button>
    </div>`;
  }

  private panel() {
    return html`<aside class="panel">
      <div class="phead">
        <button class="txt">样式和格式${caret}</button><span class="grow"></span>
        <button class="pin" aria-label="固定">${icon("pin")}</button>
        <button aria-label="关闭">${icon("close")}</button>
      </div>
      <div class="combo box cur"><select aria-label="当前样式"><option>正文</option></select>${caret}</div>
      <div class="acts"><button>新样式...</button><button>清除格式</button></div>
      <h2 class="ask">请选择要应用的格式</h2>
      <ul class="list">
        ${styleRows.map((r) => html`<li class=${classMap({ on: !!r.on })}>
          <button><span class=${r.cls}>${r.text}</span>${r.char ? html`<span class="char">a</span>` : enter}</button>
        </li>`)}
      </ul>
      <div class="show">
        <label for="show">显示:</label>
        <div class="combo box"><select id="show"><option>有效样式</option></select>${caret}</div>
      </div>
      <div class="pfoot">
        <label class="check"><input type="checkbox" checked />显示预览</label>
        <a class="smart" href="#smart">
          <svg width="14" height="14" viewBox="0 0 14 14" aria-hidden="true">
            <path d="M4 1h6l3.500 4.500L11 11l-4 2.500L3 11 .5 5.500z" fill="none" stroke="#f2ad45"/>
            <path d="M9.200 4.500q-2-1-3.500-.3T6 6.500l2 .5q1.500.800.500 2t-3.700.3M7 3v8" fill="none" stroke="#f2a432" stroke-width="1.300"/>
          </svg>智能排版</a>
      </div>
    </aside>
    <nav class="rail">
      <i class="grip"></i>
      ${["rocket", "brush", "pointer", "sliders", "picture", "bulb", "bookSearch", "help"].map(
        (n) => html`<button class=${classMap({ on: n === "brush" })} aria-label=${n}>${icon(n)}</button>`
      )}
      <span class="grow"></span><i class="line"></i>
      <svg class="ico dots3" width="16" height="6" viewBox="0 0 16 6" aria-hidden="true">
        <circle cx="2.500" cy="3" r="1.500"/><circle cx="8" cy="3" r="1.500"/><circle cx="13.500" cy="3" r="1.500"/></svg>
    </nav>`;
  }

  private status() {
    return html`<footer class="status">
      <span class="pg">页面: 1/2</span><span class="vsep"></span>
      <span class="wc">字数: 307</span><span class="vsep"></span>
      <button class="chk on">${icon("spell")}拼写检查</button>
      <button class="drop1" aria-label="拼写选项">${caret}</button><span class="vsep"></span>
      <button class="chk">${icon("content")}内容检查</button>
      <button class="drop1" aria-label="检查选项">${caret}</button><span class="vsep"></span>
      <span class="grow"></span>
      <div class="views row">
        <button aria-label="护眼模式">${icon("eye")}</button>
        <span class="toolsep"></span>
        <button class="on" aria-label="页面视图">${icon("pageView")}</button>
        <button aria-label="大纲">${icon("outline")}</button>
        <button aria-label="阅读版式">${icon("book")}</button>
        <button aria-label="Web版式">${icon("globe")}</button>
        <button aria-label="写作模式">${icon("pen")}</button>
        <span class="toolsep"></span>
      </div>
      <button class="fitbtn" aria-label="最佳显示比例">${icon("fit")}</button>
      <button class="zoom">54%${caret}</button>
      <button aria-label="缩小">${icon("minus")}</button>
      <input class="range" type="range" min="0" max="100" .value=${"23"} aria-label="显示比例" />
      <button aria-label="放大">${icon("plus")}</button>
      <span class="tail"></span>
    </footer>`;
  }

  render() {
    return html`
      ${this.titlebar()}${this.menu()}${this.ribbon()}
      <div class="work">${this.sheets()}${this.scroller()}${this.panel()}</div>
      ${this.status()}
      <div class="brand">
        <svg width="44" height="40" viewBox="0 0 44 40" aria-hidden="true">
          <defs>
            <linearGradient id="b1" x1="0" y1="1" x2="1" y2="0"><stop offset="0" stop-color="#2a6fc4"/><stop offset="1" stop-color="#5cc8f2"/></linearGradient>
            <linearGradient id="b2" x1="0" y1="1" x2="1" y2="0"><stop offset="0" stop-color="#e8e04a"/><stop offset="1" stop-color="#3fb878"/></linearGradient>
          </defs>
          <path d="M43 1C22-2 4 8 1 22q-2 9 6 9 10-1 18-9-7 5-12 4-4-1-2-6C16 9 28 3 43 1z" fill="url(#b1)"/>
          <path d="M24 14q10-4 16 1c4 7-3 18-16 22q-11 3-18 1 18-3 25-13 4-8-7-11z" fill="url(#b2)"/>
        </svg>
        <div><div class="cn">极光下载站</div><div class="en">www.xz7.com</div></div>
      </div>
      <div class="ime"><span>CH</span><span>♪</span><span>简</span></div>
    `;
  }
}
